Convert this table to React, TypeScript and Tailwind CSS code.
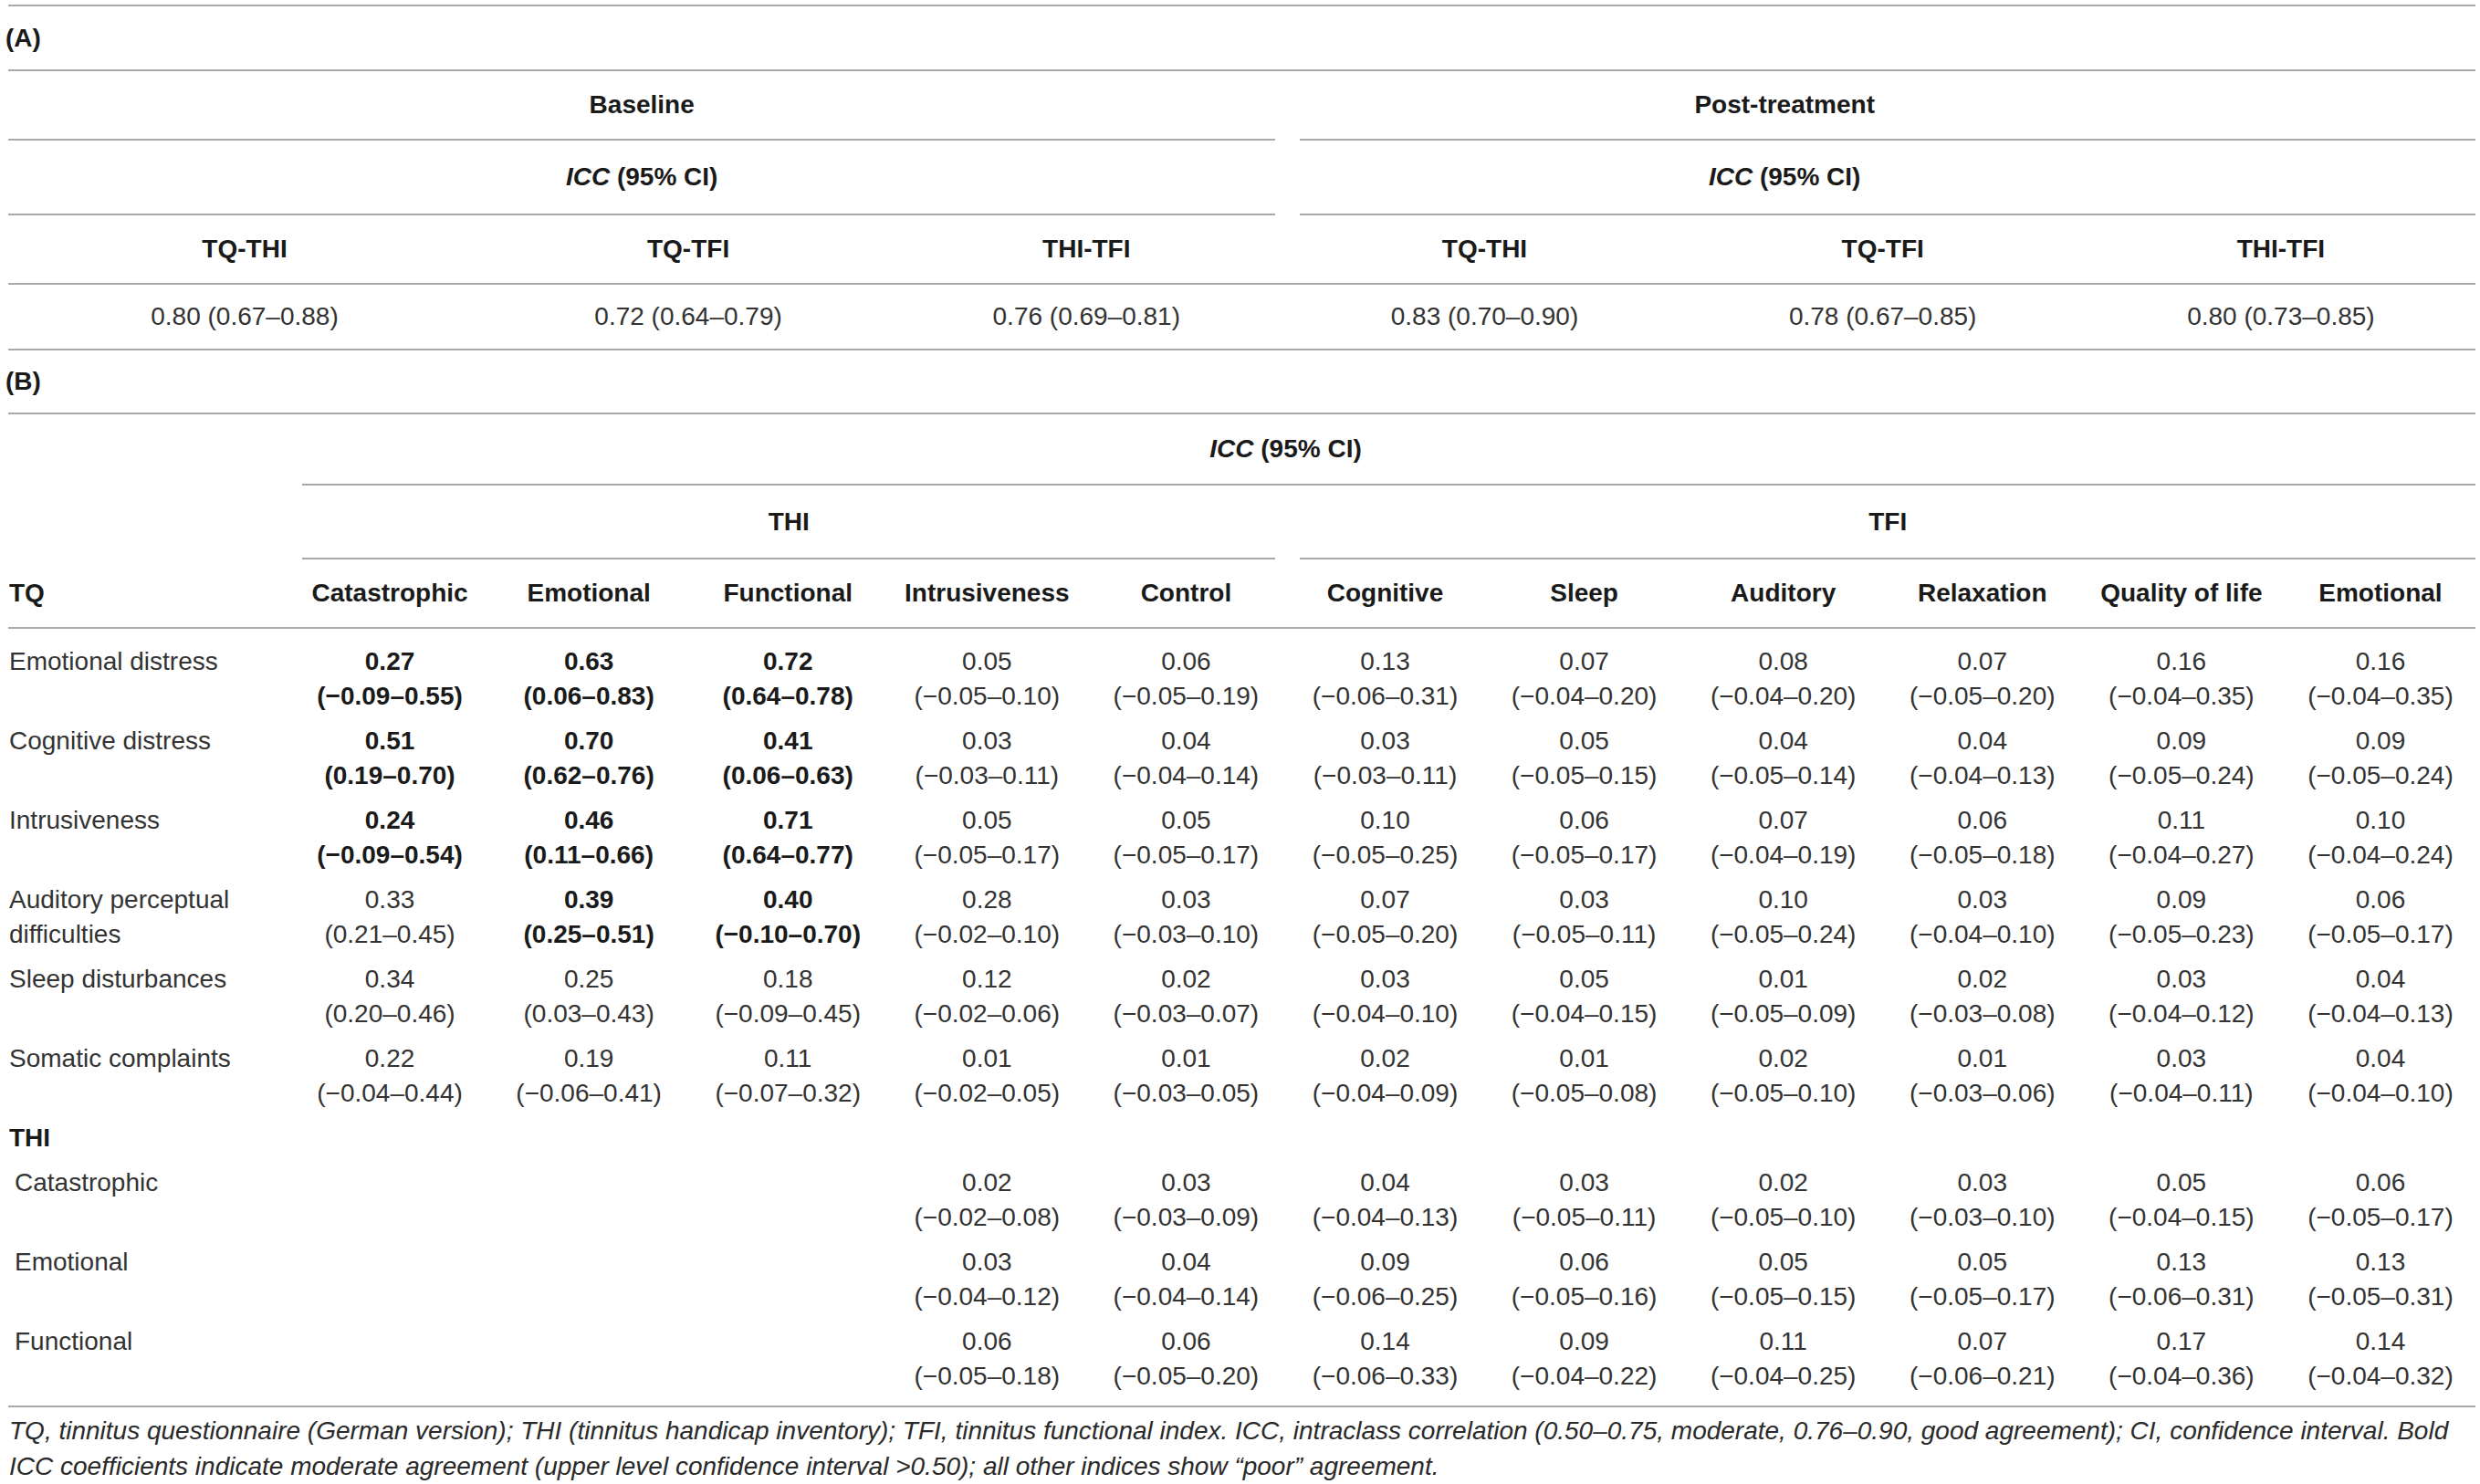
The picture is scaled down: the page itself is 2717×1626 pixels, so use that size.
const headA = ['TQ-THI', 'TQ-TFI', 'THI-TFI', 'TQ-THI', 'TQ-TFI', 'THI-TFI']
const valsA = [
  '0.80 (0.67–0.88)', '0.72 (0.64–0.79)', '0.76 (0.69–0.81)',
  '0.83 (0.70–0.90)', '0.78 (0.67–0.85)', '0.80 (0.73–0.85)',
]

const headB = [
  'Catastrophic', 'Emotional', 'Functional', 'Intrusiveness', 'Control',
  'Cognitive', 'Sleep', 'Auditory', 'Relaxation', 'Quality of life', 'Emotional',
]

// [value, ci, bold]
type Cell = [string, string, boolean?] | null

const tqRows: { label: string; cells: Cell[] }[] = [
  { label: 'Emotional distress', cells: [
    ['0.27', '(−0.09–0.55)', true], ['0.63', '(0.06–0.83)', true], ['0.72', '(0.64–0.78)', true],
    ['0.05', '(−0.05–0.10)'], ['0.06', '(−0.05–0.19)'], ['0.13', '(−0.06–0.31)'], ['0.07', '(−0.04–0.20)'],
    ['0.08', '(−0.04–0.20)'], ['0.07', '(−0.05–0.20)'], ['0.16', '(−0.04–0.35)'], ['0.16', '(−0.04–0.35)'],
  ] },
  { label: 'Cognitive distress', cells: [
    ['0.51', '(0.19–0.70)', true], ['0.70', '(0.62–0.76)', true], ['0.41', '(0.06–0.63)', true],
    ['0.03', '(−0.03–0.11)'], ['0.04', '(−0.04–0.14)'], ['0.03', '(−0.03–0.11)'], ['0.05', '(−0.05–0.15)'],
    ['0.04', '(−0.05–0.14)'], ['0.04', '(−0.04–0.13)'], ['0.09', '(−0.05–0.24)'], ['0.09', '(−0.05–0.24)'],
  ] },
  { label: 'Intrusiveness', cells: [
    ['0.24', '(−0.09–0.54)', true], ['0.46', '(0.11–0.66)', true], ['0.71', '(0.64–0.77)', true],
    ['0.05', '(−0.05–0.17)'], ['0.05', '(−0.05–0.17)'], ['0.10', '(−0.05–0.25)'], ['0.06', '(−0.05–0.17)'],
    ['0.07', '(−0.04–0.19)'], ['0.06', '(−0.05–0.18)'], ['0.11', '(−0.04–0.27)'], ['0.10', '(−0.04–0.24)'],
  ] },
  { label: 'Auditory perceptual difficulties', cells: [
    ['0.33', '(0.21–0.45)'], ['0.39', '(0.25–0.51)', true], ['0.40', '(−0.10–0.70)', true],
    ['0.28', '(−0.02–0.10)'], ['0.03', '(−0.03–0.10)'], ['0.07', '(−0.05–0.20)'], ['0.03', '(−0.05–0.11)'],
    ['0.10', '(−0.05–0.24)'], ['0.03', '(−0.04–0.10)'], ['0.09', '(−0.05–0.23)'], ['0.06', '(−0.05–0.17)'],
  ] },
  { label: 'Sleep disturbances', cells: [
    ['0.34', '(0.20–0.46)'], ['0.25', '(0.03–0.43)'], ['0.18', '(−0.09–0.45)'],
    ['0.12', '(−0.02–0.06)'], ['0.02', '(−0.03–0.07)'], ['0.03', '(−0.04–0.10)'], ['0.05', '(−0.04–0.15)'],
    ['0.01', '(−0.05–0.09)'], ['0.02', '(−0.03–0.08)'], ['0.03', '(−0.04–0.12)'], ['0.04', '(−0.04–0.13)'],
  ] },
  { label: 'Somatic complaints', cells: [
    ['0.22', '(−0.04–0.44)'], ['0.19', '(−0.06–0.41)'], ['0.11', '(−0.07–0.32)'],
    ['0.01', '(−0.02–0.05)'], ['0.01', '(−0.03–0.05)'], ['0.02', '(−0.04–0.09)'], ['0.01', '(−0.05–0.08)'],
    ['0.02', '(−0.05–0.10)'], ['0.01', '(−0.03–0.06)'], ['0.03', '(−0.04–0.11)'], ['0.04', '(−0.04–0.10)'],
  ] },
]

const thiRows: { label: string; cells: Cell[] }[] = [
  { label: 'Catastrophic', cells: [
    null, null, null,
    ['0.02', '(−0.02–0.08)'], ['0.03', '(−0.03–0.09)'], ['0.04', '(−0.04–0.13)'], ['0.03', '(−0.05–0.11)'],
    ['0.02', '(−0.05–0.10)'], ['0.03', '(−0.03–0.10)'], ['0.05', '(−0.04–0.15)'], ['0.06', '(−0.05–0.17)'],
  ] },
  { label: 'Emotional', cells: [
    null, null, null,
    ['0.03', '(−0.04–0.12)'], ['0.04', '(−0.04–0.14)'], ['0.09', '(−0.06–0.25)'], ['0.06', '(−0.05–0.16)'],
    ['0.05', '(−0.05–0.15)'], ['0.05', '(−0.05–0.17)'], ['0.13', '(−0.06–0.31)'], ['0.13', '(−0.05–0.31)'],
  ] },
  { label: 'Functional', cells: [
    null, null, null,
    ['0.06', '(−0.05–0.18)'], ['0.06', '(−0.05–0.20)'], ['0.14', '(−0.06–0.33)'], ['0.09', '(−0.04–0.22)'],
    ['0.11', '(−0.04–0.25)'], ['0.07', '(−0.06–0.21)'], ['0.17', '(−0.04–0.36)'], ['0.14', '(−0.04–0.32)'],
  ] },
]

function Rule() {
  return <div className="ml-[9px] mr-[5px] border-t-2 border-[#a9a9a9]" />
}

function Icc() {
  return <span className="font-bold"><i>ICC</i> (95% CI)</span>
}

function DataRow({ label, cells, indent }: { label: string; cells: Cell[]; indent?: boolean }) {
  return (
    <div className="grid grid-cols-[318px_repeat(11,1fr)] py-[5.5px]">
      <div className={indent ? 'pl-[16px] pr-[8px]' : 'pl-[10px] pr-[8px]'}>{label}</div>
      {cells.map((c, i) => (
        <div key={i} className={c && c[2] ? 'text-center font-bold text-[#1a1a1a]' : 'text-center'}>
          {c && <>{c[0]}<br />{c[1]}</>}
        </div>
      ))}
    </div>
  )
}

export default function App() {
  return (
    <div className="w-[2717px] bg-white text-[#333] text-[28px] leading-[38px] font-['Liberation_Sans',Arial,sans-serif]">
      <div className="pt-[5px]"><Rule /></div>

      {/* (A) */}
      <div className="h-[69px] flex items-center pl-[6px] font-bold text-[#1a1a1a]">(A)</div>
      <Rule />
      <div className="grid grid-cols-[536px_repeat(5,1fr)] text-[#1a1a1a]">
        <div className="col-span-3 ml-[9px] mr-[11px] h-[76px] border-b-2 border-[#a9a9a9] flex items-center justify-center font-bold">Baseline</div>
        <div className="col-span-3 ml-[16px] mr-[5px] h-[76px] border-b-2 border-[#a9a9a9] flex items-center justify-center pr-[226px] font-bold">Post-treatment</div>
        <div className="col-span-3 ml-[9px] mr-[11px] h-[82px] border-b-2 border-[#a9a9a9] flex items-center justify-center"><Icc /></div>
        <div className="col-span-3 ml-[16px] mr-[5px] h-[82px] border-b-2 border-[#a9a9a9] flex items-center justify-center pr-[226px]"><Icc /></div>
        {headA.map((h, i) => (
          <div key={i} className="h-[74px] flex items-center justify-center font-bold">{h}</div>
        ))}
      </div>
      <Rule />
      <div className="grid grid-cols-[536px_repeat(5,1fr)]">
        {valsA.map((v, i) => (
          <div key={i} className="h-[70px] flex items-center justify-center">{v}</div>
        ))}
      </div>
      <Rule />

      {/* (B) */}
      <div className="h-[68px] flex items-center pl-[6px] font-bold text-[#1a1a1a]">(B)</div>
      <Rule />
      <div className="grid grid-cols-[318px_repeat(11,1fr)] text-[#1a1a1a]">
        <div />
        <div className="col-span-11 ml-[13px] mr-[5px] h-[78px] border-b-2 border-[#a9a9a9] flex items-center justify-center pr-[226px]"><Icc /></div>
        <div />
        <div className="col-span-5 ml-[13px] mr-[11px] h-[81px] border-b-2 border-[#a9a9a9] flex items-center justify-center font-bold">THI</div>
        <div className="col-span-6 ml-[16px] mr-[5px] h-[81px] border-b-2 border-[#a9a9a9] flex items-center justify-center font-bold">TFI</div>
        <div className="h-[74px] flex items-center pl-[10px] font-bold">TQ</div>
        {headB.map((h, i) => (
          <div key={i} className="h-[74px] flex items-center justify-center font-bold whitespace-nowrap">{h}</div>
        ))}
      </div>
      <Rule />

      <div className="pt-[11px] pb-[8px]">
        {tqRows.map(r => <DataRow key={r.label} label={r.label} cells={r.cells} />)}
        <div className="py-[5.5px] pl-[10px] font-bold text-[#1a1a1a]">THI</div>
        {thiRows.map(r => <DataRow key={r.label} label={r.label} cells={r.cells} indent />)}
      </div>
      <Rule />

      <p className="pt-[6px] pl-[10px] italic leading-[39px] text-[#2a2a2a] whitespace-nowrap">
        TQ, tinnitus questionnaire (German version); THI (tinnitus handicap inventory); TFI, tinnitus functional index. ICC, intraclass correlation (0.50–0.75, moderate, 0.76–0.90, good agreement); CI, confidence interval. Bold
        <br />
        ICC coefficients indicate moderate agreement (upper level confidence interval &gt;0.50); all other indices show “poor” agreement.
      </p>
    </div>
  )
}
